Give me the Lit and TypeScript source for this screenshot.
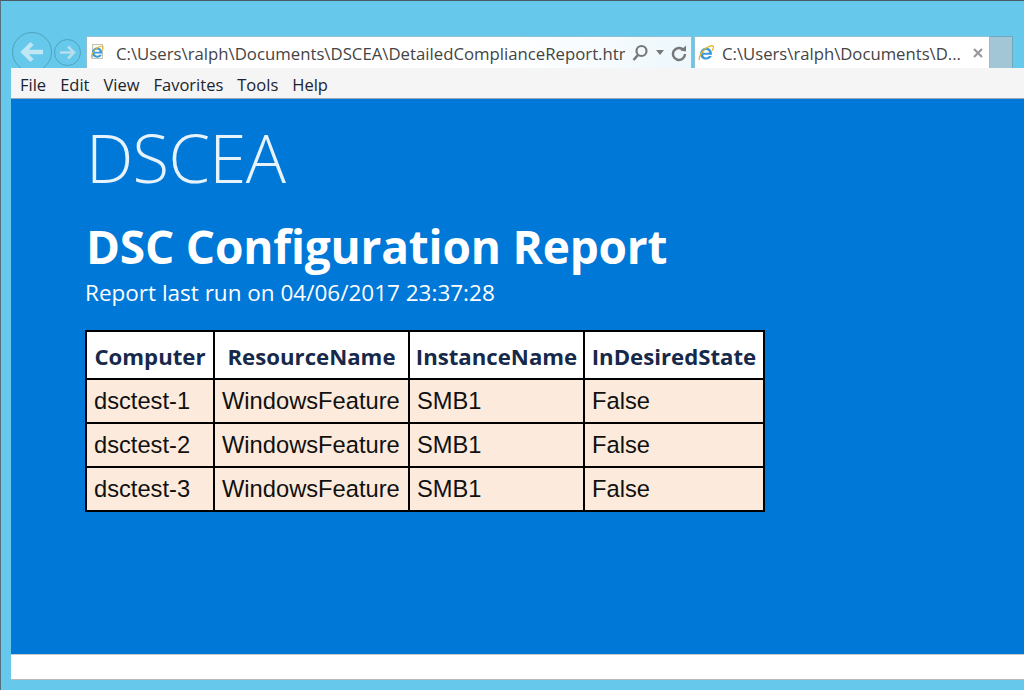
import { LitElement, html, css } from "lit";
import { customElement } from "lit/decorators.js";

const rows = ["dsctest-1", "dsctest-2", "dsctest-3"];

const ieIcon = () => html`<svg width="16" height="16" viewBox="0 0 16 16">
  <path d="M2 9.200C2 5.400 4.900 2.700 8.300 2.700c3.400 0 5.700 2.600 5.700 6v1.100H5.200c.2 1.600 1.400 2.600 3 2.600 1.200 0 2.100-.5 2.800-1.300h2.800c-1 2.200-3.100 3.500-5.600 3.500C4.600 14.600 2 12.200 2 9.200z" fill="#3a9bdc"/>
  <path d="M5.200 7.700h5.900c-.1-1.500-1.300-2.600-3-2.600s-2.700 1.100-2.900 2.600z" fill="#fff"/>
  <path d="M1.600 15C.2 13 3.500 6.500 8 3.300c3-2.100 6-3 7-2 .8.800.2 2.600-1 4.400" fill="none" stroke="#eeb422" stroke-width="1.300"/>
</svg>`;

@customElement("app-root")
export class AppRoot extends LitElement {
  static styles = css`
    :host {
      display: block;
      width: 1024px;
      height: 690px;
      overflow: hidden;
      font-family: "Open Sans", "Noto Sans", sans-serif;
    }
    .window {
      box-sizing: border-box;
      width: 1024px;
      height: 690px;
      background: #66c8ea;
      border-top: 1px solid #4a5a63;
      border-left: 1px solid #55707e;
      padding: 35px 0 10px 10px;
      display: flex;
      flex-direction: column;
    }
    .nav {
      height: 32px;
      display: flex;
      align-items: stretch;
      position: relative;
      padding-left: 75px;
    }
    .back {
      position: absolute;
      left: 1px;
      top: -4px;
      width: 40px;
      height: 40px;
    }
    .forward {
      position: absolute;
      left: 43px;
      top: 3px;
      width: 27px;
      height: 27px;
    }
    .address {
      box-sizing: border-box;
      width: 606px;
      background: linear-gradient(90deg, #ffffff 0%, #ffffff 70%, #edf7fc 100%);
      border: 1px solid #8fc0d4;
      border-bottom: none;
      display: flex;
      align-items: center;
      padding-left: 2px;
      color: #444;
      font-size: 16.75px;
    }
    .page-icon {
      width: 16px;
      height: 17px;
      flex: none;
      margin-right: 11px;
      position: relative;
      display: flex;
    }
    .page-sheet {
      position: absolute;
      left: 3px;
      top: 0;
      width: 11px;
      height: 15px;
      box-sizing: border-box;
      background: #fbf8ee;
      border: 1px solid #c4c4bc;
    }
    .page-glyph {
      position: relative;
      display: flex;
      transform: scale(0.85);
    }
    .url {
      width: 509px;
      flex: none;
      overflow: hidden;
      white-space: nowrap;
      padding-top: 2px;
    }
    .tools {
      display: flex;
      align-items: center;
      gap: 7px;
      margin-left: 6px;
    }
    .tab {
      box-sizing: border-box;
      width: 296px;
      margin-left: 2px;
      background: #fff;
      border: 1px solid #8fc0d4;
      border-bottom: none;
      display: flex;
      align-items: center;
      padding-left: 3px;
      color: #444;
      font-size: 16.7px;
      white-space: nowrap;
    }
    .tab-icon {
      width: 16px;
      height: 16px;
      flex: none;
      margin-right: 8px;
      display: flex;
    }
    .tab-label {
      width: 252px;
      flex: none;
      padding-top: 2px;
    }
    .close {
      flex: none;
      display: flex;
      margin-left: -1px;
    }
    .new-tab {
      box-sizing: border-box;
      width: 23px;
      background: #a3c6d6;
      border: 1px solid #6fa9bf;
      border-left: none;
      border-bottom: none;
    }
    .nav-fill {
      flex: 1;
    }
    .menu {
      position: relative;
      box-sizing: border-box;
      height: 31px;
      background: #f5f5f5;
      border-bottom: 1px solid #9aa7b3;
      display: flex;
      align-items: center;
      gap: 14px;
      padding: 3px 0 0 9px;
      color: #1b2430;
      font-size: 16.5px;
    }
    .content {
      flex: 1;
      background: #0078d7;
      color: #fff;
      padding: 0 0 0 74px;
    }
    .logo {
      font-weight: 300;
      font-size: 67px;
      line-height: 60px;
      letter-spacing: -0.7px;
      padding: 28px 0 0 1px;
      color: #e6f3fc;
    }
    h1 {
      margin: 29px 0 0 1px;
      font-size: 46px;
      font-weight: 700;
      letter-spacing: -0.2px;
      line-height: 60px;
    }
    .sub {
      font-size: 22.5px;
      line-height: 30px;
      margin-top: 2px;
    }
    table {
      margin-top: 22px;
      border-collapse: collapse;
      table-layout: fixed;
      width: 678px;
      border: 2px solid #000;
    }
    th,
    td {
      border: 2px solid #000;
      overflow: hidden;
      white-space: nowrap;
    }
    th {
      background: #fff;
      color: #17294a;
      font-size: 22.2px;
      font-weight: 700;
      height: 44px;
      padding: 2px 0 0;
      text-align: center;
    }
    td {
      background: #fcebdc;
      color: #111;
      font-family: "Liberation Sans", Arial, sans-serif;
      font-size: 23.7px;
      height: 42px;
      padding: 0 0 0 7px;
    }
    .status {
      height: 26px;
      box-sizing: border-box;
      background: #fff;
      border-top: 1px solid #c9c9c9;
      border-bottom: 1px solid #b9b9b9;
    }
  `;

  render() {
    return html`
      <div class="window">
        <div class="nav">
          <svg class="back" viewBox="0 0 40 40">
            <circle cx="20" cy="20" r="19.500" fill="none" stroke="#4fa3bd" />
            <path d="M31 20H12M20 11.500 11.500 20l8.500 8.500" fill="none" stroke="#bfe6f4" stroke-width="4.500" />
          </svg>
          <svg class="forward" viewBox="0 0 27 27">
            <circle cx="13.500" cy="13.500" r="13" fill="none" stroke="#4fa3bd" />
            <path d="M6 13.500h13M14 7.500l6 6-6 6" fill="none" stroke="#b5dfee" stroke-width="2.600" />
          </svg>
          <div class="address">
            <span class="page-icon"><span class="page-sheet"></span><span class="page-glyph">${ieIcon()}</span></span>
            <span class="url">C:\\Users\\ralph\\Documents\\DSCEA\\DetailedComplianceReport.htm</span>
            <span class="tools">
              <svg width="18" height="18" viewBox="0 0 18 18">
                <circle cx="10.500" cy="7" r="5" fill="none" stroke="#777" stroke-width="2.200" />
                <path d="M7 11 2.500 16" stroke="#777" stroke-width="2.600" />
              </svg>
              <svg width="8" height="5" viewBox="0 0 8 5"><path d="M0 0h8L4 5z" fill="#777" /></svg>
              <svg width="16" height="18" viewBox="0 0 16 18">
                <path d="M12.500 6A6 6 0 1 0 14 10" fill="none" stroke="#777" stroke-width="2.400" />
                <path d="M9.500 6.500 15 7.500V1.500z" fill="#777" />
              </svg>
            </span>
          </div>
          <div class="tab">
            <span class="tab-icon">${ieIcon()}</span>
            <span class="tab-label">C:\\Users\\ralph\\Documents\\D...</span>
            <span class="close">
              <svg width="10" height="10" viewBox="0 0 10 10">
                <path d="M1 1l8 8M9 1 1 9" stroke="#9a9a9a" stroke-width="2.200" />
              </svg>
            </span>
          </div>
          <div class="new-tab"></div>
          <div class="nav-fill"></div>
        </div>
        <div class="menu">
          <span>File</span><span>Edit</span><span>View</span><span>Favorites</span><span>Tools</span><span>Help</span>
        </div>
        <div class="content">
          <div class="logo">DSCEA</div>
          <h1>DSC Configuration Report</h1>
          <div class="sub">Report last run on 04/06/2017 23:37:28</div>
          <table>
            <colgroup>
              <col style="width:128px" />
              <col style="width:195px" />
              <col style="width:175px" />
              <col style="width:180px" />
            </colgroup>
            <tr>
              <th>Computer</th>
              <th>ResourceName</th>
              <th>InstanceName</th>
              <th>InDesiredState</th>
            </tr>
            ${rows.map(
              (r) => html`<tr>
                <td>${r}</td>
                <td>WindowsFeature</td>
                <td>SMB1</td>
                <td>False</td>
              </tr>`
            )}
          </table>
        </div>
        <div class="status"></div>
      </div>
    `;
  }
}
